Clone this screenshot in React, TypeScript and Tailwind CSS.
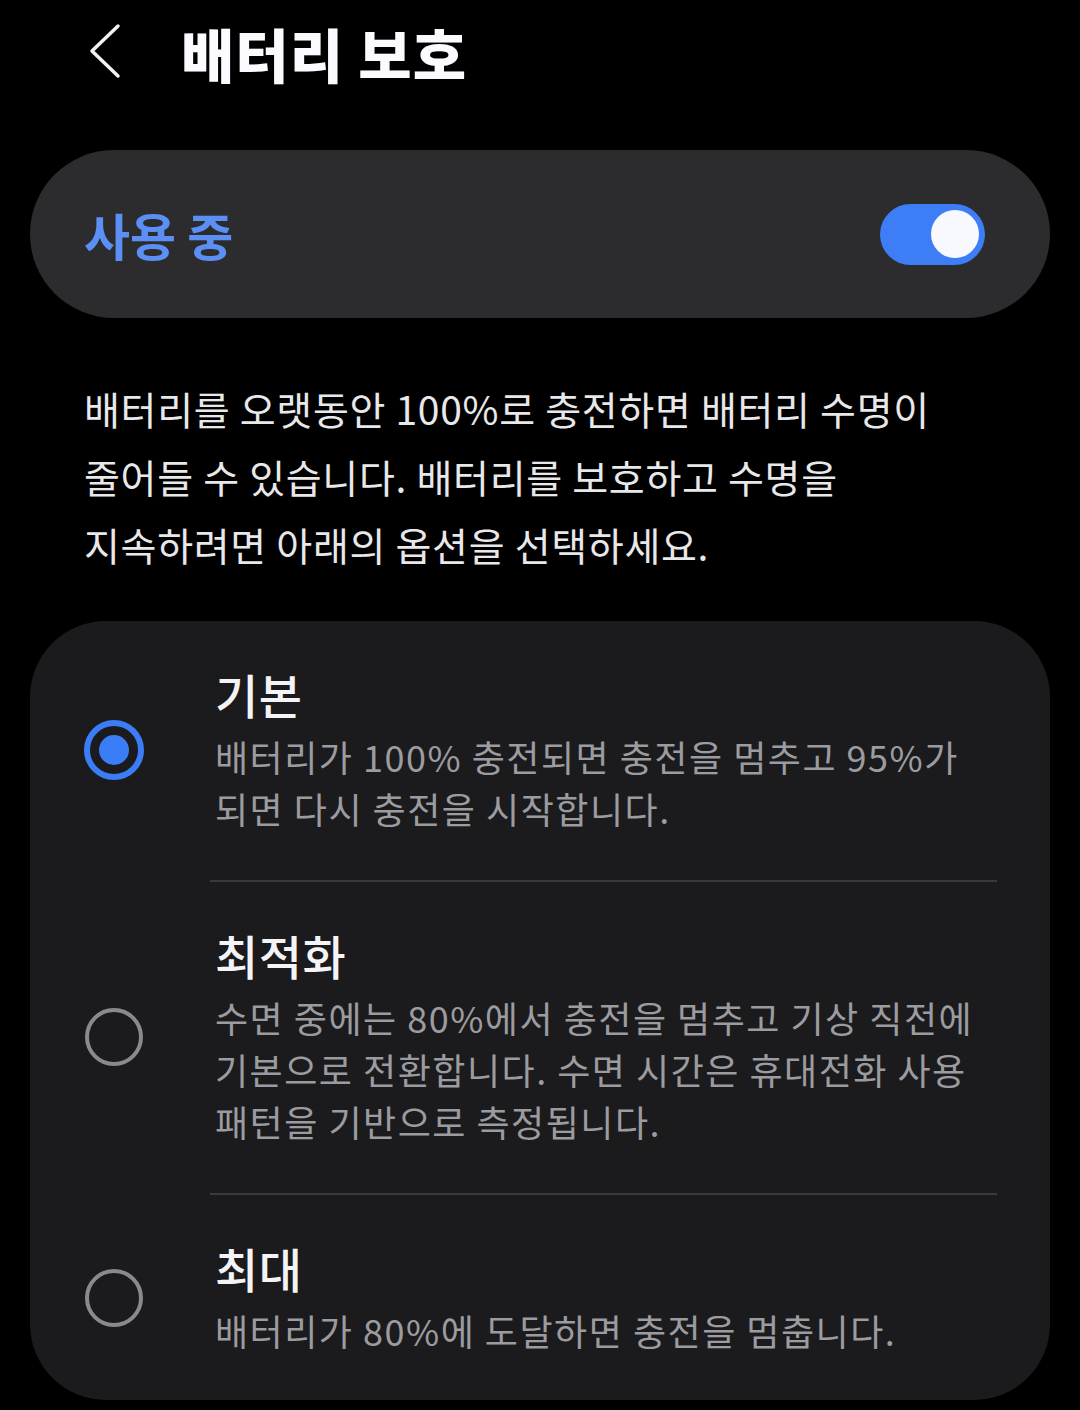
import React from "react";

const FONT = { fontFamily: '"Noto Sans CJK KR", "Noto Sans", sans-serif' };

function Radio({ checked }: { checked: boolean }) {
  if (checked) {
    return (
      <div className="flex h-[60px] w-[60px] shrink-0 items-center justify-center rounded-full border-[6px] border-[#3b7df6]">
        <div className="h-[30px] w-[30px] rounded-full bg-[#3b7df6]" />
      </div>
    );
  }
  return <div className="h-[58px] w-[58px] shrink-0 rounded-full border-[4px] border-[#8a8a8e]" />;
}

function Option({
  title,
  lines,
  checked,
  last,
}: {
  title: string;
  lines: string[];
  checked: boolean;
  last?: boolean;
}) {
  return (
    <div className={`flex items-center pl-[54px] pt-[45px] ${last ? "pb-[44px]" : "pb-[46px]"}`}>
      <div className="flex w-[60px] justify-center">
        <Radio checked={checked} />
      </div>
      <div className="ml-[71px] flex flex-col whitespace-nowrap">
        <div className="text-[47px] font-medium leading-[56px] tracking-[0.5px] text-[#f4f4f6]">{title}</div>
        <div className="mt-[8px] text-[36px] leading-[52px] tracking-[1.5px] text-[#9c9ca0]">
          {lines.map((l, i) => (
            <div key={i}>{l}</div>
          ))}
        </div>
      </div>
    </div>
  );
}

export default function App() {
  return (
    <div className="h-[1410px] w-[1080px] overflow-hidden bg-black" style={FONT}>
      {/* Header */}
      <div className="flex h-[106px] items-center">
        <svg className="ml-[88px] h-[60px] w-[36px]" viewBox="0 0 36 60" fill="none">
          <path d="M30 3 L4 28 L30 53" stroke="#f2f2f4" strokeWidth="3.5" strokeLinecap="round" strokeLinejoin="round" />
        </svg>
        <div className="ml-[57px] text-[58px] font-black leading-none tracking-[1px] text-[#fafaff]">배터리 보호</div>
      </div>

      {/* Toggle card */}
      <div className="mx-[30px] mt-[44px] flex h-[168px] items-center justify-between rounded-full bg-[#2c2c2e] pl-[54px] pr-[65px]">
        <div className="text-[50px] font-bold leading-none text-[#5b8ff3]">사용 중</div>
        <div className="flex h-[61px] w-[105px] items-center justify-end rounded-full bg-[#3d7ef6] pr-[6px]">
          <div className="h-[48px] w-[48px] rounded-full bg-[#f8f8ff]" />
        </div>
      </div>

      {/* Description */}
      <div className="mt-[56px] whitespace-nowrap pl-[84px] text-[39px] leading-[68px] tracking-[0.7px] text-[#e8e8ea]">
        <div>배터리를 오랫동안 100%로 충전하면 배터리 수명이</div>
        <div>줄어들 수 있습니다. 배터리를 보호하고 수명을</div>
        <div>지속하려면 아래의 옵션을 선택하세요.</div>
      </div>

      {/* Options card */}
      <div className="mx-[30px] mt-[43px] rounded-[76px] bg-[#1b1b1d]">
        <Option
          checked
          title="기본"
          lines={["배터리가 100% 충전되면 충전을 멈추고 95%가", "되면 다시 충전을 시작합니다."]}
        />
        <div className="ml-[180px] mr-[53px] h-[2px] bg-[#3a3a3c]" />
        <Option
          checked={false}
          title="최적화"
          lines={[
            "수면 중에는 80%에서 충전을 멈추고 기상 직전에",
            "기본으로 전환합니다. 수면 시간은 휴대전화 사용",
            "패턴을 기반으로 측정됩니다.",
          ]}
        />
        <div className="ml-[180px] mr-[53px] h-[2px] bg-[#3a3a3c]" />
        <Option checked={false} last title="최대" lines={["배터리가 80%에 도달하면 충전을 멈춥니다."]} />
      </div>
    </div>
  );
}
